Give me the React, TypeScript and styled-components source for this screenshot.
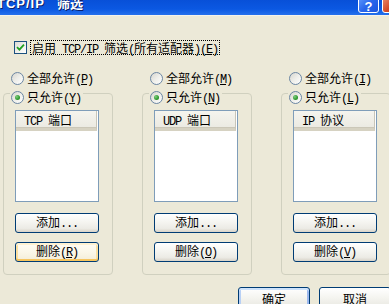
import React from "react";
import styled, { createGlobalStyle, css } from "styled-components";

const CJK = `"Noto Sans CJK SC", "Noto Sans CJK JP", sans-serif`;

const Global = createGlobalStyle`
  html, body { margin: 0; padding: 0; background: #ECE9D8; }
  body { font-family: ${CJK}; }
`;

const Window = styled.div`
  width: 389px;
  height: 304px;
  overflow: hidden;
  background: #ECE9D8;
  font-family: ${CJK};
  font-size: 12px;
  color: #000;
  display: flex;
  flex-direction: column;
`;

const TitleBar = styled.div`
  flex: none;
  height: 15px;
  display: flex;
  align-items: flex-start;
  justify-content: space-between;
  background: linear-gradient(to bottom, #0850D8 0%, #0B58E2 60%, #2470EC 100%);
  border-bottom: 1px solid #F4F2EA;
  overflow: hidden;
`;

const TitleText = styled.div`
  margin: -5px 0 0 -3px;
  font-weight: bold;
  font-size: 13px;
  line-height: 15px;
  color: #fff;
  text-shadow: 1px 1px 0 #0A1F6A;
  white-space: nowrap;
`;

const TitleLat = styled.span`
  font-family: "Liberation Sans", sans-serif;
  letter-spacing: 1px;
  margin-right: 12px;
`;

const Controls = styled.div`
  display: flex;
  gap: 3px;
  margin: -8px -14px 0 0;
`;

const CtrlBtn = styled.div<{ $kind: "help" | "close" }>`
  width: 21px;
  height: 21px;
  box-sizing: border-box;
  border: 1px solid #fff;
  border-radius: 3px;
  display: flex;
  align-items: center;
  justify-content: center;
  padding-top: 8px;
  color: #fff;
  font: bold 13px "Liberation Sans", sans-serif;
  background: ${(p) =>
    p.$kind === "help"
      ? "linear-gradient(135deg, #6BA6FF 0%, #2A66EC 55%, #1B55DE 100%)"
      : "linear-gradient(135deg, #EE9A80 0%, #D24A28 55%, #C43E1E 100%)"};
`;

const Body = styled.div`
  flex: 1;
  display: flex;
  flex-direction: column;
  padding: 24px 0 0 3px;
`;

const CheckRow = styled.div`
  display: flex;
  align-items: center;
  gap: 3px;
  margin-left: 11px;
  height: 15px;
`;

const CheckBox = styled.span`
  flex: none;
  width: 13px;
  height: 13px;
  box-sizing: border-box;
  border: 1px solid #1C5180;
  background: linear-gradient(135deg, #DCDCD6 0%, #F2F2EF 60%, #FFFFFF 100%);
  display: flex;
  align-items: center;
  justify-content: center;
`;

const FocusLabel = styled.span`
  border: 1px dotted #000;
  padding: 0 1px;
  height: 13px;
  line-height: 13px;
  white-space: nowrap;
`;

const Lat = styled.span`
  font-family: "Liberation Mono", monospace;
  font-size: 12px;
  letter-spacing: -1.2px;
`;

const U = styled.span`
  text-decoration: underline;
`;

const Columns = styled.div`
  margin-top: 17px;
  display: flex;
  gap: 29px;
`;

const Column = styled.div`
  flex: none;
  width: 110px;
  display: flex;
  flex-direction: column;
`;

const RadioRow = styled.div<{ $legend?: boolean }>`
  display: flex;
  align-items: center;
  gap: 3px;
  height: 13px;
  line-height: 13px;
  white-space: nowrap;
  align-self: flex-start;
  ${(p) =>
    p.$legend
      ? css`
          margin: -3px 0 0 -5px;
          padding: 0 2px 0 1px;
          background: #ECE9D8;
        `
      : css`
          margin-left: 8px;
        `}
`;

const RadioCircle = styled.span<{ $on?: boolean }>`
  flex: none;
  width: 13px;
  height: 13px;
  box-sizing: border-box;
  border-radius: 50%;
  border: 1px solid #6B86A3;
  background: linear-gradient(135deg, #D6D5CE 0%, #EEEEEA 50%, #FFFFFF 100%);
  display: flex;
  align-items: center;
  justify-content: center;
  &::after {
    content: "";
    display: ${(p) => (p.$on ? "block" : "none")};
    width: 5px;
    height: 5px;
    border-radius: 50%;
    background: radial-gradient(circle at 35% 35%, #7FCB7F 0%, #2E9A2E 60%, #1E7A1E 100%);
  }
`;

const GroupBox = styled.div`
  margin-top: 8px;
  height: 182px;
  box-sizing: border-box;
  border: 1px solid #D0D0BF;
  border-radius: 4px;
  display: flex;
  flex-direction: column;
  padding-left: 11px;
`;

const ListView = styled.div`
  margin-top: 6px;
  width: 84px;
  height: 92px;
  box-sizing: border-box;
  border: 1px solid #7F9DB9;
  background: #fff;
`;

const Header = styled.div`
  height: 20px;
  box-sizing: border-box;
  width: 81px;
  padding-left: 8px;
  line-height: 17px;
  white-space: nowrap;
  background: linear-gradient(to bottom, #F5F4EE 0%, #EBEAE2 100%);
  border-bottom: 3px solid #D6D2C2;
  border-right: 1px solid #C8C5B8;
  box-shadow: inset 0 -1px 0 #CBC7B8;
`;

const Btn = styled.button<{ $focus?: boolean; $primary?: boolean; $w?: number; $h?: number }>`
  box-sizing: border-box;
  flex: none;
  width: ${(p) => p.$w ?? 84}px;
  height: ${(p) => p.$h ?? 20}px;
  padding: 0;
  border: 1px solid #003C74;
  border-radius: 3px;
  background: linear-gradient(to bottom, #FFFFFF 0%, #F6F6F2 40%, #ECEBE5 80%, #D8D3C8 100%);
  font-family: ${CJK};
  font-size: 12px;
  line-height: 16px;
  color: #000;
  white-space: nowrap;
  ${(p) =>
    p.$focus &&
    css`
      background: linear-gradient(to bottom, #FFFDF5 0%, #FBF7E8 50%, #F3EDD8 100%);
      box-shadow: inset 0 -2px 0 #F6C55E, inset 0 2px 0 #FFF2D2, inset 2px 0 0 #FBDFA0, inset -2px 0 0 #FBDFA0;
    `}
  ${(p) =>
    p.$primary &&
    css`
      box-shadow: inset 0 -2px 0 #7C9EE4, inset 0 2px 0 #CEE3FC, inset 2px 0 0 #B8D0F5, inset -2px 0 0 #9DB9EE;
    `}
`;

const AddBtn = styled(Btn)`
  margin-top: 11px;
`;

const DelBtn = styled(Btn)`
  margin-top: 9px;
`;

const BottomRow = styled.div`
  margin-top: 12px;
  margin-right: -2px;
  display: flex;
  justify-content: flex-end;
  gap: 9px;
`;

type Col = {
  allKey: string;
  onlyKey: string;
  head: React.ReactNode;
  delKey: string;
  focus?: boolean;
};

const cols: Col[] = [
  { allKey: "P", onlyKey: "Y", head: <><Lat>TCP </Lat>端口</>, delKey: "R", focus: true },
  { allKey: "M", onlyKey: "N", head: <><Lat>UDP </Lat>端口</>, delKey: "O" },
  { allKey: "I", onlyKey: "L", head: <><Lat>IP </Lat>协议</>, delKey: "V" },
];

const Check = () => (
  <svg width="9" height="9" viewBox="0 0 9 9">
    <path d="M1 4.2 L3.4 6.6 L8 1.6" fill="none" stroke="#21A121" strokeWidth="1.8" />
  </svg>
);

export default function App() {
  return (
    <Window>
      <Global />
      <TitleBar>
        <TitleText>
          <TitleLat>TCP/IP</TitleLat>筛选
        </TitleText>
        <Controls>
          <CtrlBtn $kind="help">?</CtrlBtn>
          <CtrlBtn $kind="close">×</CtrlBtn>
        </Controls>
      </TitleBar>
      <Body>
        <CheckRow>
          <CheckBox>
            <Check />
          </CheckBox>
          <FocusLabel>
            启用<Lat> TCP/IP </Lat>筛选<Lat>(</Lat>所有适配器<Lat>)(<U>E</U>)</Lat>
          </FocusLabel>
        </CheckRow>
        <Columns>
          {cols.map((c) => (
            <Column key={c.allKey}>
              <RadioRow>
                <RadioCircle />
                <span>
                  全部允许<Lat>(<U>{c.allKey}</U>)</Lat>
                </span>
              </RadioRow>
              <GroupBox>
                <RadioRow $legend>
                  <RadioCircle $on />
                  <span>
                    只允许<Lat>(<U>{c.onlyKey}</U>)</Lat>
                  </span>
                </RadioRow>
                <ListView>
                  <Header>{c.head}</Header>
                </ListView>
                <AddBtn>
                  添加<Lat>...</Lat>
                </AddBtn>
                <DelBtn $focus={c.focus}>
                  删除<Lat>(<U>{c.delKey}</U>)</Lat>
                </DelBtn>
              </GroupBox>
            </Column>
          ))}
        </Columns>
        <BottomRow>
          <Btn $primary $w={72} $h={23}>确定</Btn>
          <Btn $w={72} $h={23}>取消</Btn>
        </BottomRow>
      </Body>
    </Window>
  );
}
